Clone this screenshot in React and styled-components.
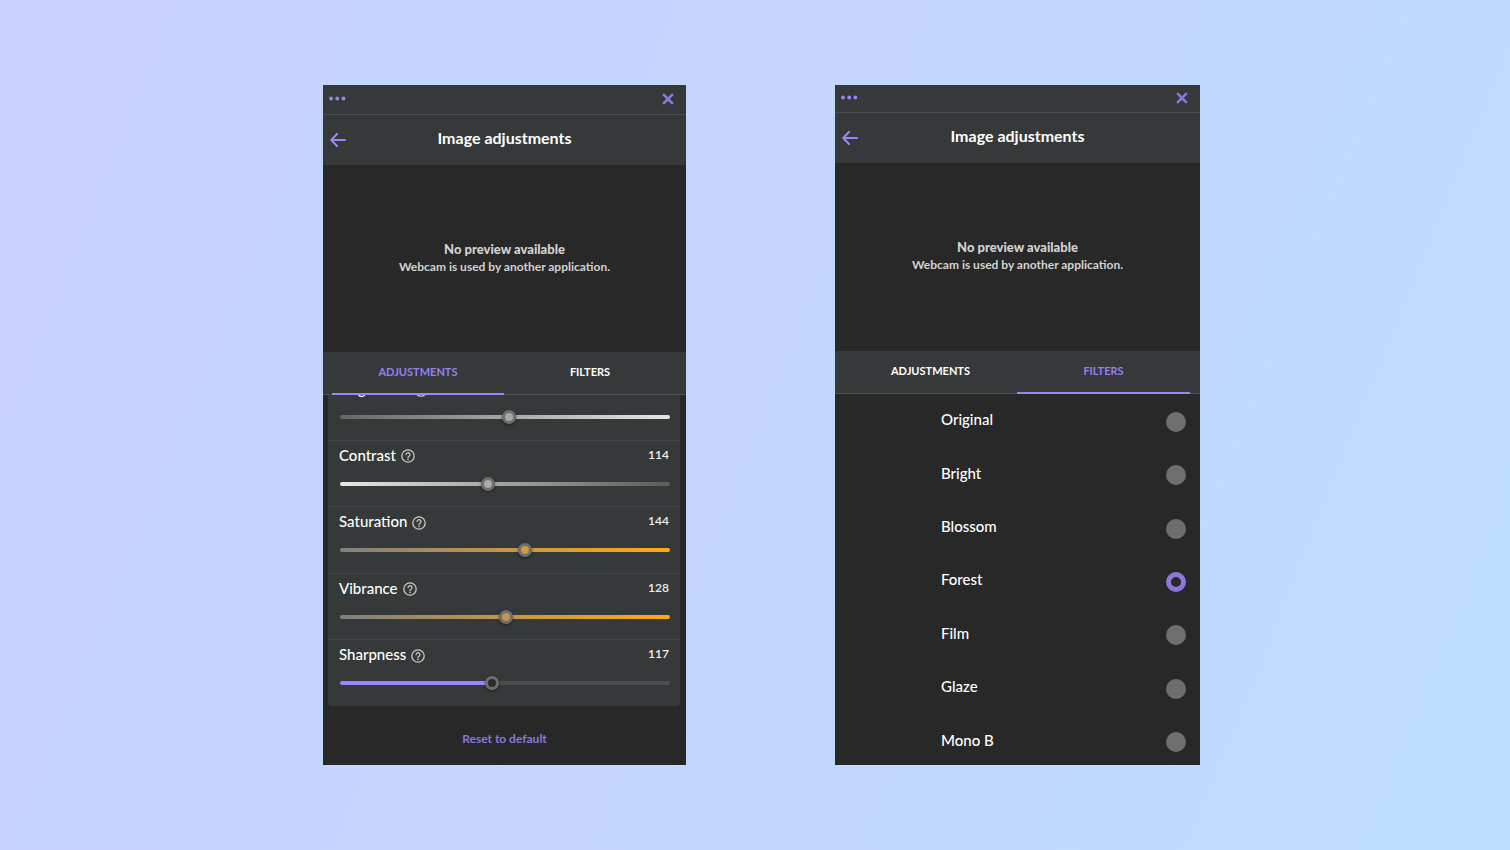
import React, { useState } from 'react'
import styled, { createGlobalStyle } from 'styled-components'

const GlobalStyle = createGlobalStyle`
  * {
    box-sizing: border-box;
  }
  body {
    margin: 0;
    font-family: Lato, "Open Sans", sans-serif;
    color: #fff;
  }
  button, input {
    font-family: inherit;
    margin: 0;
  }
`

const Page = styled.main`
  display: grid;
  grid-template-columns: 363fr 365fr;
  gap: 149px;
  height: 100vh;
  min-height: 600px;
  padding: 85px 310px 85px 323px;
  background: linear-gradient(112deg, #cad0ff 0%, #c6d3ff 18%, #c4d6ff 50%, #c0daff 80%, #bedeff 100%);
`

const Panel = styled.section`
  display: flex;
  flex-direction: column;
  min-height: 0;
  min-width: 0;
  overflow: hidden;
  background: #282828;
`

const TitleBar = styled.div`
  display: flex;
  flex: none;
  align-items: center;
  justify-content: space-between;
  height: ${(props) => (props.$compact ? 28 : 30)}px;
  padding: 0 12px 2px 6px;
  background: #363939;
  border-bottom: 1px solid #4b4e4f;
`

const Header = styled.header`
  display: grid;
  flex: none;
  grid-template-columns: 30px 1fr 30px;
  align-items: center;
  height: 50px;
  background: #363939;
`

const Title = styled.h1`
  margin: 0;
  padding-bottom: 4px;
  font-size: 16px;
  line-height: 20px;
  font-weight: 700;
  text-align: center;
`

const IconButton = styled.button`
  display: flex;
  align-items: center;
  justify-content: center;
  padding: 0;
  border: 0;
  background: none;
  color: #9b85f5;
  cursor: pointer;
`

const Preview = styled.div`
  display: flex;
  flex: none;
  flex-direction: column;
  align-items: center;
  justify-content: center;
  height: ${(props) => (props.$compact ? 188 : 187)}px;
  padding-bottom: 2px;
  font-size: 12px;
  line-height: 17px;
  font-weight: 700;
  color: #d2d2d2;
  strong {
    font-size: 13px;
  }
`

const TabBar = styled.div`
  display: grid;
  flex: none;
  grid-template-columns: 1fr 1fr;
  height: 43px;
  padding: 0 10px 0 9px;
  background: #363939;
  box-shadow: inset 0 -1px #4f5152;
`

const Tab = styled.button`
  padding: 0 0 1px;
  border: 0;
  border-bottom: 2px solid ${(props) => (props.$active ? '#9b85f5' : 'transparent')};
  background: none;
  color: ${(props) => (props.$active ? '#9580f2' : '#fff')};
  font-size: 11px;
  line-height: 16px;
  font-weight: 700;
  text-transform: uppercase;
  cursor: pointer;
`

/* column-reverse keeps the list scrolled to its end */
const Scroller = styled.div`
  display: flex;
  flex: 1;
  flex-direction: column-reverse;
  min-height: 0;
  overflow-y: auto;
  scrollbar-width: none;
`

const Card = styled.div`
  display: grid;
  grid-auto-rows: 1fr;
  height: 333px;
  margin: 0 6px 0 5px;
  border-radius: 4px;
  background: #363939;
`

const Setting = styled.div`
  display: flex;
  flex-direction: column;
  padding: 4px 11px 0 11px;
  border-top: 1px solid #434647;
`

const SettingHead = styled.div`
  display: flex;
  align-items: center;
  gap: 5px;
  height: 20px;
  label {
    font-size: 15px;
    line-height: 20px;
    font-weight: 500;
  }
  output {
    margin-left: auto;
    font-size: 12px;
    line-height: 20px;
    font-weight: 600;
    color: #f0f0f0;
  }
`

const HelpButton = styled(IconButton)`
  padding-top: 3px;
  color: #c8c8c8;
`

const Range = styled.input`
  appearance: none;
  height: 14px;
  margin: 12px -1px 0 1px;
  background: none;
  &::-webkit-slider-runnable-track {
    height: 4px;
    border-radius: 2px;
    background: ${(props) => props.$track};
  }
  &::-webkit-slider-thumb {
    appearance: none;
    width: 14px;
    height: 14px;
    margin-top: -5px;
    border: 3px solid #6e6e6e;
    border-radius: 50%;
    background: ${(props) => props.$thumb};
    box-shadow: 0 1px 3px rgba(0, 0, 0, 0.5);
  }
`

const Footer = styled.div`
  display: flex;
  align-items: center;
  justify-content: center;
  height: 59px;
  padding-top: 6px;
`

const ResetButton = styled.button`
  padding: 4px;
  border: 0;
  background: none;
  color: #8b76e0;
  font-size: 12px;
  line-height: 16px;
  font-weight: 700;
  cursor: pointer;
`

const FilterList = styled.div`
  flex: 1;
  min-height: 0;
  overflow-y: auto;
  scrollbar-width: none;
`

const FilterRows = styled.div`
  display: grid;
  grid-auto-rows: 1fr;
  height: 375px;
  padding-top: 1px;
`

const FilterRow = styled.label`
  display: flex;
  align-items: center;
  justify-content: space-between;
  padding: 0 14px 0 106px;
  font-size: 15px;
  line-height: 20px;
  font-weight: 500;
  cursor: pointer;
  span {
    padding-bottom: 5px;
  }
`

const Radio = styled.input`
  appearance: none;
  width: 20px;
  height: 20px;
  border-radius: 50%;
  background: #6e6e6e;
  &:checked {
    border: 5px solid #8b76dc;
    background: #282828;
  }
`

const DotsIcon = () => (
  <svg width="17" height="5" viewBox="0 0 17 5" fill="currentColor">
    <circle cx="2" cy="2.5" r="1.9" />
    <circle cx="8.2" cy="2.5" r="1.9" />
    <circle cx="14.4" cy="2.5" r="1.9" />
  </svg>
)

const CloseIcon = () => (
  <svg width="12" height="12" viewBox="0 0 12 12" fill="none" stroke="#8b78e0" strokeWidth="2.6" strokeLinecap="round">
    <path d="M1.9 1.9 10.1 10.1M10.1 1.9 1.9 10.1" />
  </svg>
)

const BackIcon = () => (
  <svg width="16" height="14" viewBox="0 0 16 14" fill="none" stroke="currentColor" strokeWidth="2" strokeLinecap="round" strokeLinejoin="round">
    <path d="M15 7H1.2M7 1 1.2 7 7 13" />
  </svg>
)

const HelpIcon = () => (
  <svg width="14" height="14" viewBox="0 0 14 14" fill="none" stroke="currentColor" strokeWidth="1.3" strokeLinecap="round">
    <circle cx="7" cy="7" r="6.2" />
    <path d="M5.1 5.6a1.9 1.9 0 1 1 2.9 1.6c-.7.4-1 .7-1 1.3" />
    <circle cx="7" cy="10.4" r=".8" fill="currentColor" stroke="none" />
  </svg>
)

const grayUp = 'linear-gradient(90deg, #666, #e6e6e6)'
const grayDown = 'linear-gradient(90deg, #e6e6e6, #5c5c5c)'
const amber = 'linear-gradient(90deg, #808080, #c49648 50%, #ffa914)'

const settings = [
  { name: 'Brightness', value: 131, track: grayUp, thumb: '#a6a6a6' },
  { name: 'Contrast', value: 114, track: grayDown, thumb: '#ababab' },
  { name: 'Saturation', value: 144, track: amber, thumb: '#cc9a40' },
  { name: 'Vibrance', value: 128, track: amber, thumb: '#c49648' },
  { name: 'Sharpness', value: 117, thumb: '#2c2c2c' },
]

const filters = ['Original', 'Bright', 'Blossom', 'Forest', 'Film', 'Glaze', 'Mono B']

function Adjustment({ name, value, track, thumb }) {
  const [current, setCurrent] = useState(value)
  const id = `setting-${name.toLowerCase()}`
  const percent = Math.round((current / 255) * 100)
  const fill = track || `linear-gradient(90deg, #9d86fb ${percent}%, #4d4d4f ${percent}%)`
  return (
    <Setting>
      <SettingHead>
        <label htmlFor={id}>{name}</label>
        <HelpButton aria-label={`About ${name}`}><HelpIcon /></HelpButton>
        <output htmlFor={id}>{current}</output>
      </SettingHead>
      <Range
        id={id}
        type="range"
        min="0"
        max="255"
        value={current}
        onChange={(e) => setCurrent(Number(e.target.value))}
        $track={fill}
        $thumb={thumb}
      />
    </Setting>
  )
}

function AdjustmentsTab() {
  return (
    <Scroller>
      <div>
        <Card>
          {settings.map((item) => <Adjustment key={item.name} {...item} />)}
        </Card>
        <Footer>
          <ResetButton>Reset to default</ResetButton>
        </Footer>
      </div>
    </Scroller>
  )
}

function FiltersTab() {
  const [selected, setSelected] = useState('Forest')
  return (
    <FilterList>
      <FilterRows>
        {filters.map((name) => (
          <FilterRow key={name}>
            <span>{name}</span>
            <Radio type="radio" name="filter" checked={selected === name} onChange={() => setSelected(name)} />
          </FilterRow>
        ))}
      </FilterRows>
    </FilterList>
  )
}

function ImagePanel({ initialTab, compact }) {
  const [tab, setTab] = useState(initialTab)
  return (
    <Panel>
      <TitleBar $compact={compact}>
        <IconButton aria-label="More"><DotsIcon /></IconButton>
        <IconButton aria-label="Close"><CloseIcon /></IconButton>
      </TitleBar>
      <Header>
        <IconButton aria-label="Back"><BackIcon /></IconButton>
        <Title>Image adjustments</Title>
      </Header>
      <Preview $compact={compact}>
        <strong>No preview available</strong>
        <div>Webcam is used by another application.</div>
      </Preview>
      <TabBar role="tablist">
        {['Adjustments', 'Filters'].map((name) => (
          <Tab key={name} role="tab" aria-selected={tab === name} $active={tab === name} onClick={() => setTab(name)}>
            {name}
          </Tab>
        ))}
      </TabBar>
      {tab === 'Adjustments' ? <AdjustmentsTab /> : <FiltersTab />}
    </Panel>
  )
}

export default function App() {
  return (
    <>
      <GlobalStyle />
      <Page>
        <ImagePanel initialTab="Adjustments" />
        <ImagePanel initialTab="Filters" compact />
      </Page>
    </>
  )
}
